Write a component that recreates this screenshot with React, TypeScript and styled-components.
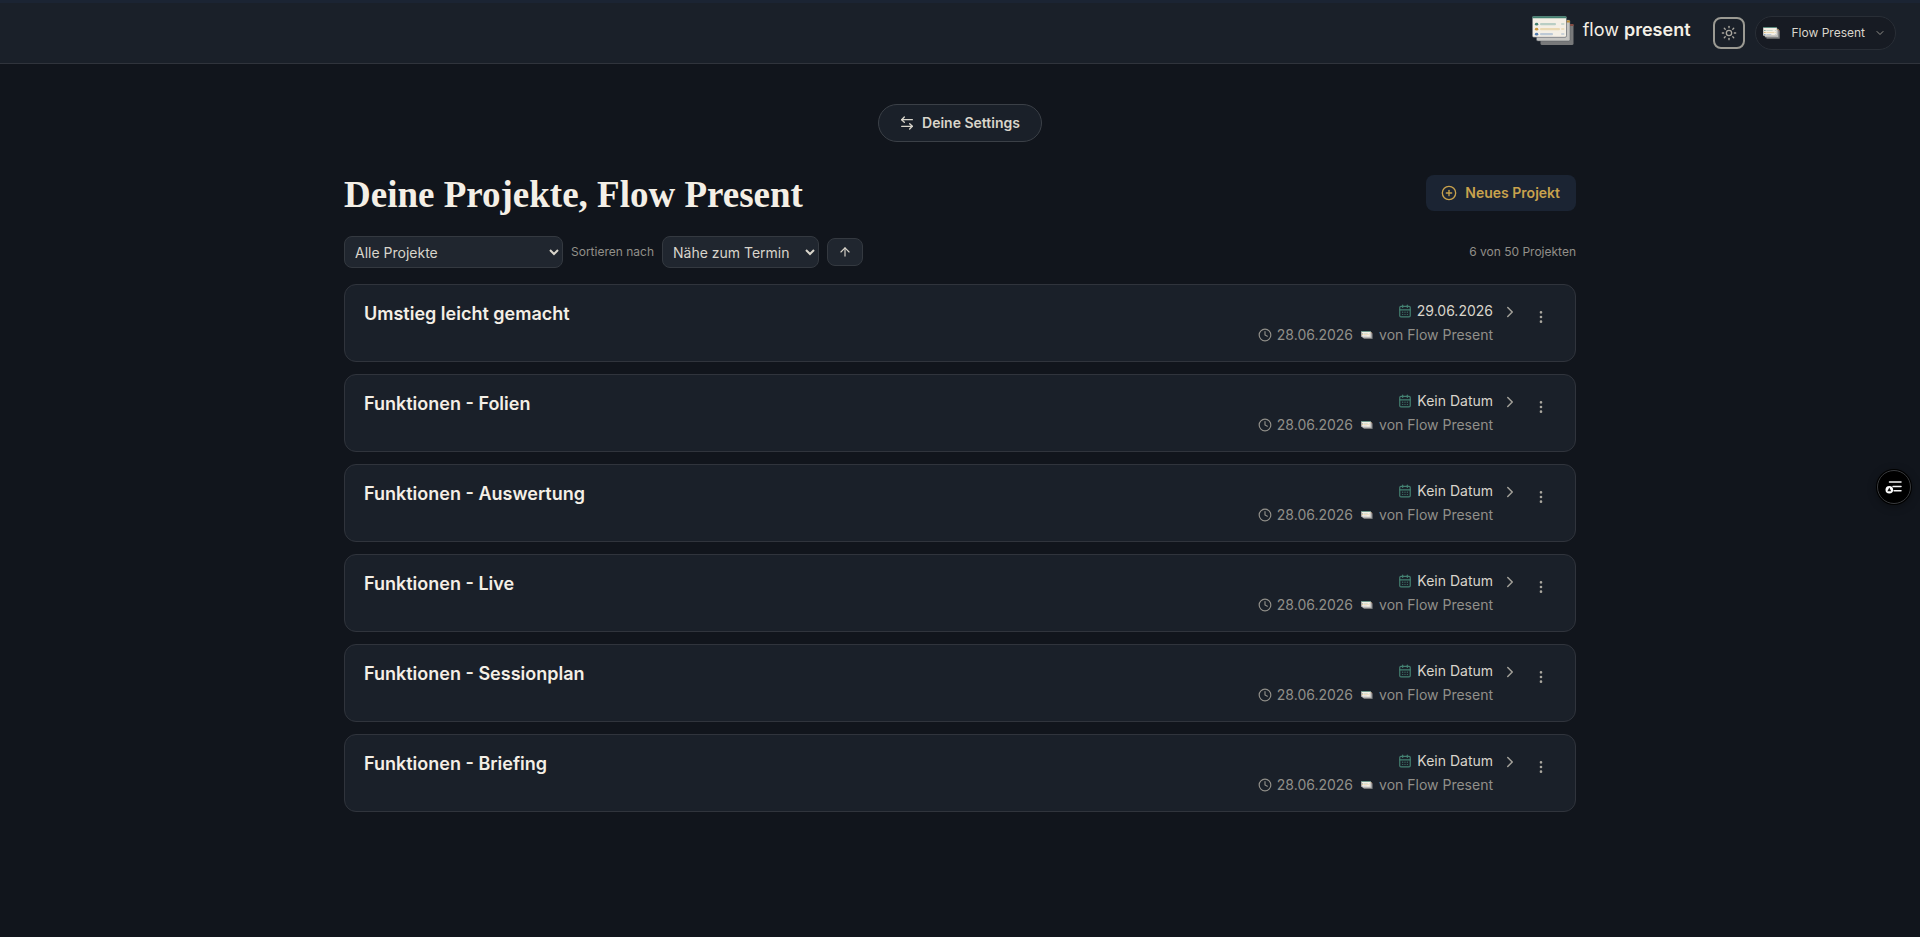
import React from 'react';
import styled, { createGlobalStyle } from 'styled-components';
import {
  ArrowLeftRight,
  ArrowUp,
  CalendarDays,
  ChevronDown,
  ChevronRight,
  CirclePlus,
  Clock,
  EllipsisVertical,
  Sun,
} from 'lucide-react';

const color = {
  page: '#11151c',
  surface: '#1a2029',
  raised: '#20262f',
  navy: '#1b2433',
  line: '#30343c',
  cream: '#f4efe6',
  text: '#d9d5cb',
  muted: '#918f89',
  gold: '#c9a24d',
  green: '#438071',
};

const GlobalStyle = createGlobalStyle`
  *, *::before, *::after { box-sizing: border-box; }
  body {
    margin: 0;
    background: ${color.page};
    color: ${color.text};
    font-family: Inter, 'Liberation Sans', sans-serif;
    font-size: 14px;
    line-height: 24px;
    -webkit-font-smoothing: antialiased;
  }
  button, select { font: inherit; color: inherit; cursor: pointer; margin: 0; }
  svg { display: block; flex: none; }
`;

const Header = styled.header`
  display: flex;
  align-items: center;
  justify-content: flex-end;
  height: 64px;
  padding: 0 24px;
  border-top: 3px solid ${color.navy};
  border-bottom: 1px solid ${color.line};
  background: ${color.surface};
`;

const Brand = styled.a`
  display: flex;
  align-items: center;
  gap: 9px;
  margin-right: 22px;
  padding-bottom: 6px;
  color: ${color.cream};
  font-size: 18px;
  text-decoration: none;
`;

const BrandName = styled.span`
  strong { font-weight: 600; }
`;

const ThemeButton = styled.button`
  display: grid;
  place-items: center;
  width: 32px;
  height: 32px;
  margin-right: 10px;
  padding: 0;
  border: 2px solid #9b9a93;
  border-radius: 8px;
  background: transparent;
  color: #aaa79f;
`;

const AccountButton = styled.button`
  display: flex;
  align-items: center;
  height: 34px;
  padding: 0 9px 0 7px;
  border: 1px solid #292e36;
  border-radius: 17px;
  background: #171b23;
  font-size: 12px;
  color: ${color.text};
  span { margin: 0 9px 0 12px; }
`;

const Main = styled.main`
  max-width: 1280px;
  margin: 0 auto;
  padding: 40px 24px;
`;

const SettingsRow = styled.div`
  display: flex;
  justify-content: center;
  margin-bottom: 33px;
`;

const SettingsButton = styled.button`
  display: flex;
  align-items: center;
  gap: 7px;
  height: 38px;
  padding: 0 21px 0 20px;
  border: 1px solid #3b4047;
  border-radius: 19px;
  background: ${color.surface};
  font-weight: 600;
`;

const TitleRow = styled.div`
  display: flex;
  align-items: center;
  justify-content: space-between;
  height: 36px;
  margin-bottom: 25px;
`;

const Title = styled.h1`
  margin: 0;
  padding-top: 4px;
  color: ${color.cream};
  font-family: 'Liberation Serif', serif;
  font-size: 37px;
  font-weight: 700;
  line-height: 36px;
`;

const NewButton = styled.button`
  display: flex;
  align-items: center;
  gap: 8px;
  height: 36px;
  padding: 0 16px 0 15px;
  border: 0;
  border-radius: 8px;
  background: ${color.navy};
  color: ${color.gold};
  font-weight: 600;
`;

const FilterRow = styled.div`
  display: flex;
  align-items: center;
  gap: 8px;
  margin-bottom: 16px;
  color: ${color.muted};
  font-size: 12px;
`;

const Select = styled.select<{ $width: number }>`
  width: ${(p) => p.$width}px;
  height: 32px;
  padding: 0 6px;
  border: 1px solid #343940;
  border-radius: 8px;
  background: ${color.raised};
  color: ${color.text};
  font-size: 14px;
`;

const DirectionButton = styled.button`
  display: grid;
  place-items: center;
  width: 36px;
  height: 28px;
  padding: 0;
  border: 1px solid #343940;
  border-radius: 8px;
  background: ${color.raised};
  color: ${color.text};
`;

const Count = styled.span`
  margin-left: auto;
`;

const ProjectList = styled.ul`
  display: grid;
  gap: 12px;
  margin: 0;
  padding: 0;
  list-style: none;
`;

const Card = styled.li`
  display: flex;
  align-items: flex-start;
  height: 78px;
  padding: 14px 18px 14px 19px;
  border: 1px solid ${color.line};
  border-radius: 12px;
  background: ${color.surface};
`;

const CardTitle = styled.h2`
  flex: 1;
  margin: 3px 0 0;
  color: ${color.cream};
  font-size: 18px;
  font-weight: 600;
  line-height: 24px;
`;

const Meta = styled.div`
  display: grid;
  justify-items: end;
`;

const MetaLine = styled.div<{ $muted?: boolean }>`
  display: flex;
  align-items: center;
  gap: 5px;
  color: ${(p) => (p.$muted ? color.muted : color.text)};
`;

const Author = styled.span`
  display: flex;
  align-items: center;
  gap: 6px;
  margin-left: 3px;
`;

const OpenLink = styled.a`
  display: grid;
  place-items: center;
  height: 26px;
  margin: 0 6px 0 8px;
  color: #a3a19a;
`;

const MenuButton = styled.button`
  display: grid;
  place-items: center;
  width: 32px;
  height: 36px;
  padding: 0;
  border: 0;
  background: transparent;
  color: #aaa79f;
`;

const FloatingButton = styled.button`
  position: fixed;
  top: 52%;
  right: 9px;
  display: grid;
  place-items: center;
  width: 34px;
  height: 34px;
  margin-top: -17px;
  padding: 0;
  border: 1px solid #393b3e;
  border-radius: 50%;
  background: #000;
  box-shadow: 0 0 0 1px #000, 0 2px 10px rgba(0, 0, 0, 0.4);
`;

function SlidesLogo({ width, height }: { width: number; height: number }) {
  return (
    <svg width={width} height={height} viewBox="0 0 42 29" aria-hidden="true">
      <rect x="8.5" y="8" width="33" height="21" rx="1.5" fill="#78797a" />
      <rect x="37" y="8" width="4.5" height="2" fill="#854c43" />
      <rect x="4.5" y="4" width="33.5" height="21" rx="1.5" fill="#c4c3c0" stroke="#555a60" strokeWidth=".5" />
      <rect x="34" y="4.5" width="4" height="2" fill="#b98d3b" />
      <rect x=".3" y=".3" width="34.2" height="21" rx="1.5" fill="#f4efe5" stroke="#4b535c" strokeWidth=".6" />
      <path d="M.3 2.3V1.5Q.3.3 1.5.3H33.3Q34.5.3 34.5 1.5V2.3Z" fill="#438071" />
      <ellipse cx="4.6" cy="8.2" rx="1.7" ry="1.4" fill="#438071" />
      <ellipse cx="4.6" cy="13.2" rx="1.7" ry="1.4" fill="#c9963a" />
      <ellipse cx="4.6" cy="18.2" rx="1.7" ry="1.4" fill="#4f79ad" />
      <rect x="8" y="7" width="16" height="2.2" rx="1" fill="#b9cec4" />
      <rect x="8" y="12" width="20" height="2.2" rx="1" fill="#ead9b3" />
      <rect x="8" y="17" width="13" height="2.2" rx="1" fill="#bdc9d5" />
      <rect x="29" y="7.2" width="3.5" height="1.6" rx=".8" fill="#b9cec4" />
      <rect x="29" y="12.2" width="3.5" height="1.6" rx=".8" fill="#ead9b3" />
      <rect x="29" y="17.2" width="3.5" height="1.6" rx=".8" fill="#bdc9d5" />
    </svg>
  );
}

function OutlineIcon() {
  return (
    <svg width="18" height="14" viewBox="0 0 18 14" aria-hidden="true">
      <path d="M4.5 2H16M8 6.5h8M9 10.7h7" stroke="#f4f4f4" strokeWidth="1.5" strokeLinecap="round" />
      <circle cx="4.3" cy="9.8" r="3.8" fill="#fff" />
      <path d="M4.3 7.6 6.2 11.2H2.4Z" fill="#111" />
    </svg>
  );
}

const projects = [
  { name: 'Umstieg leicht gemacht', due: '29.06.2026' },
  { name: 'Funktionen - Folien', due: 'Kein Datum' },
  { name: 'Funktionen - Auswertung', due: 'Kein Datum' },
  { name: 'Funktionen - Live', due: 'Kein Datum' },
  { name: 'Funktionen - Sessionplan', due: 'Kein Datum' },
  { name: 'Funktionen - Briefing', due: 'Kein Datum' },
];

export default function App() {
  return (
    <>
      <GlobalStyle />
      <Header>
        <Brand href="#">
          <SlidesLogo width={42} height={29} />
          <BrandName>flow <strong>present</strong></BrandName>
        </Brand>
        <ThemeButton aria-label="Helles Design">
          <Sun size={16} />
        </ThemeButton>
        <AccountButton>
          <SlidesLogo width={17} height={12} />
          <span>Flow Present</span>
          <ChevronDown size={12} color={color.muted} />
        </AccountButton>
      </Header>
      <Main>
        <SettingsRow>
          <SettingsButton>
            <ArrowLeftRight size={16} />
            Deine Settings
          </SettingsButton>
        </SettingsRow>
        <TitleRow>
          <Title>Deine Projekte, Flow Present</Title>
          <NewButton>
            <CirclePlus size={16} />
            Neues Projekt
          </NewButton>
        </TitleRow>
        <FilterRow>
          <Select $width={219} aria-label="Projekte filtern">
            <option>Alle Projekte</option>
          </Select>
          <label htmlFor="sort">Sortieren nach</label>
          <Select $width={157} id="sort">
            <option>Nähe zum Termin</option>
          </Select>
          <DirectionButton aria-label="Aufsteigend">
            <ArrowUp size={14} />
          </DirectionButton>
          <Count>6 von 50 Projekten</Count>
        </FilterRow>
        <ProjectList>
          {projects.map((project) => (
            <Card key={project.name}>
              <CardTitle>{project.name}</CardTitle>
              <Meta>
                <MetaLine>
                  <CalendarDays size={14} color={color.green} />
                  {project.due}
                </MetaLine>
                <MetaLine $muted>
                  <Clock size={14} />
                  28.06.2026
                  <Author>
                    <SlidesLogo width={12} height={8} />
                    von Flow Present
                  </Author>
                </MetaLine>
              </Meta>
              <OpenLink href="#" aria-label={`${project.name} öffnen`}>
                <ChevronRight size={18} />
              </OpenLink>
              <MenuButton aria-label="Weitere Aktionen">
                <EllipsisVertical size={16} />
              </MenuButton>
            </Card>
          ))}
        </ProjectList>
      </Main>
      <FloatingButton aria-label="Seitenleiste öffnen">
        <OutlineIcon />
      </FloatingButton>
    </>
  );
}
